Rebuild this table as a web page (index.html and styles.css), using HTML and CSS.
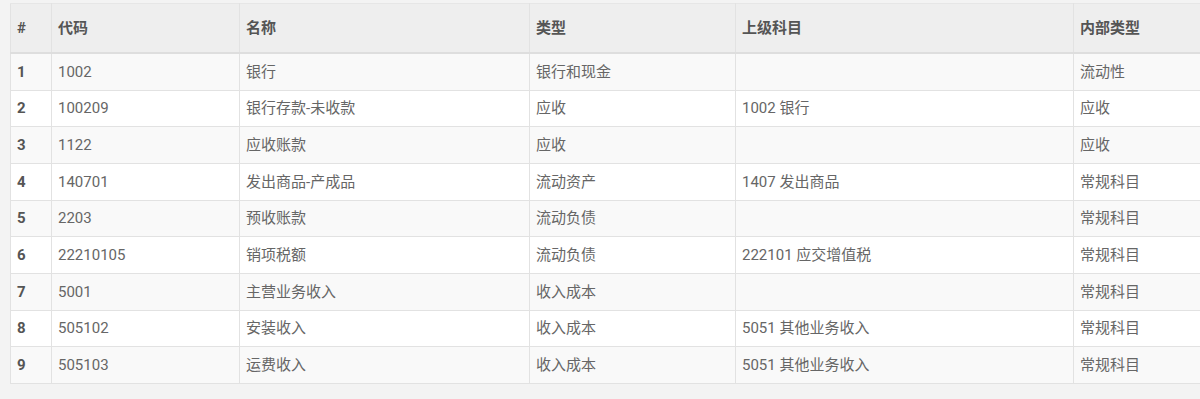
FILE: index.html
```html
<!DOCTYPE html>
<html lang="zh">
<head>
<meta charset="utf-8">
<title>科目</title>
<link rel="stylesheet" href="styles.css">
</head>
<body>
<div class="page">
  <table class="grid">
    <colgroup>
      <col class="c-idx"><col class="c-code"><col class="c-name"><col class="c-type"><col class="c-parent"><col class="c-inner">
    </colgroup>
    <thead>
      <tr><th>#</th><th>代码</th><th>名称</th><th>类型</th><th>上级科目</th><th>内部类型</th></tr>
    </thead>
    <tbody>
      <tr><th>1</th><td>1002</td><td>银行</td><td>银行和现金</td><td></td><td>流动性</td></tr>
      <tr><th>2</th><td>100209</td><td>银行存款-未收款</td><td>应收</td><td>1002 银行</td><td>应收</td></tr>
      <tr><th>3</th><td>1122</td><td>应收账款</td><td>应收</td><td></td><td>应收</td></tr>
      <tr><th>4</th><td>140701</td><td>发出商品-产成品</td><td>流动资产</td><td>1407 发出商品</td><td>常规科目</td></tr>
      <tr><th>5</th><td>2203</td><td>预收账款</td><td>流动负债</td><td></td><td>常规科目</td></tr>
      <tr><th>6</th><td>22210105</td><td>销项税额</td><td>流动负债</td><td>222101 应交增值税</td><td>常规科目</td></tr>
      <tr><th>7</th><td>5001</td><td>主营业务收入</td><td>收入成本</td><td></td><td>常规科目</td></tr>
      <tr><th>8</th><td>505102</td><td>安装收入</td><td>收入成本</td><td>5051 其他业务收入</td><td>常规科目</td></tr>
      <tr><th>9</th><td>505103</td><td>运费收入</td><td>收入成本</td><td>5051 其他业务收入</td><td>常规科目</td></tr>
    </tbody>
  </table>
</div>
</body>
</html>
```
FILE: styles.css
```css
html, body {
  margin: 0;
  padding: 0;
  background: #f3f3f3;
}
.page {
  padding: 3px 0 0 10px;
}
.grid {
  border-collapse: collapse;
  table-layout: fixed;
  width: 1190px;
  background: #fff;
  font-family: Roboto, "Noto Sans CJK SC", sans-serif;
  font-size: 15px;
  color: #666;
}
.c-idx { width: 41px; }
.c-code { width: 188px; }
.c-name { width: 290px; }
.c-type { width: 206px; }
.c-parent { width: 338px; }
.c-inner { width: 127px; }
.grid th, .grid td {
  text-align: left;
  padding: 0 6px;
  border: 1px solid #e2e2e2;
  line-height: 20px;
  white-space: nowrap;
  overflow: hidden;
}
.grid thead th {
  background: #eeeeee;
  height: 48px;
  color: #555;
  font-weight: 700;
  border-bottom: 2px solid #dedede;
  border-top: 1px solid #e6e6e6;
}
.grid tbody th, .grid tbody td {
  height: 35.67px;
}
.grid tbody th {
  color: #555;
  font-weight: 700;
}
.grid tbody tr:nth-child(odd) {
  background: #f9f9f9;
}
.grid tbody tr:nth-child(even) {
  background: #fff;
}
```
